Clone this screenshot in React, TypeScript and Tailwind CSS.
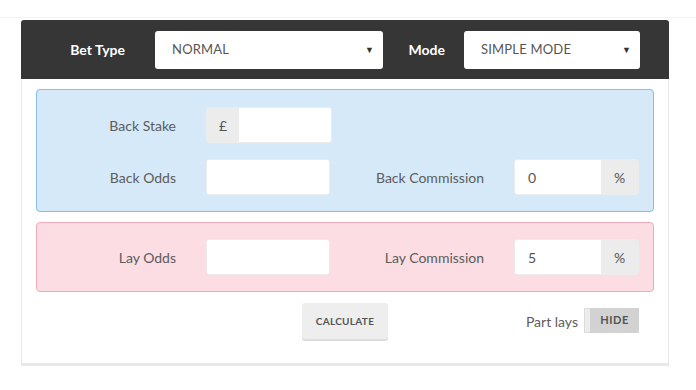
import React from 'react';

const font = { fontFamily: 'Lato, "Noto Sans", sans-serif' };

const Select = ({ value, width }: { value: string; width: string }) => (
    <div className={`${width} h-[38px] bg-white rounded-[3px] flex items-center justify-between pl-[17px] pr-[9px]`}>
        <span className="text-[13px] text-[#555] tracking-[0.2px]">{value}</span>
        <span className="text-[9px] text-[#333] leading-none">▼</span>
    </div>
);

const Field = ({ children }: { children?: React.ReactNode }) => (
    <div className="flex items-center h-[36px]">
        {children}
    </div>
);

const Label = ({ text, width }: { text: string; width: string }) => (
    <div className={`${width} text-right pr-[30px] text-[14px] text-[#5c5c5c]`}>{text}</div>
);

const TextInput = ({ value = '' }: { value?: string }) => (
    <div className="w-[124px] h-[36px] bg-white rounded-[3px] border border-[#ececec] flex items-center pl-[13px] text-[14px] text-[#555]">
        {value}
    </div>
);

const PercentInput = ({ value }: { value: string }) => (
    <div className="flex h-[36px] rounded-[3px] overflow-hidden border border-[#ececec]">
        <div className="w-[86px] bg-white flex items-center pl-[13px] text-[14px] text-[#555]">{value}</div>
        <div className="w-[37px] bg-[#ececec] flex items-center justify-center text-[14px] text-[#555]">%</div>
    </div>
);

export default function App() {
    return (
        <div className="w-[696px] h-[390px] bg-white" style={font}>
            <div className="h-[18px] border-b border-[#f3f3f3]" />
            <div className="ml-[21px] mt-[2px] w-[648px] bg-white rounded-t-[3px] border-x border-[#e8e8e8] shadow-[0_3px_0_#e8e8e8]">
                {/* header */}
                <div className="-mx-px h-[59px] bg-[#363636] rounded-t-[3px] flex items-center">
                    <div className="w-[134px] text-right pr-[30px] text-[14px] font-bold text-white">Bet Type</div>
                    <Select value="NORMAL" width="w-[228px]" />
                    <div className="w-[81px] text-right pr-[19px] text-[14px] font-bold text-white">Mode</div>
                    <Select value="SIMPLE MODE" width="w-[176px]" />
                </div>

                <div className="px-[14px] pt-[10px] pb-[24px]">
                    {/* back */}
                    <div className="bg-[#d6e9f8] border border-[#85bdeb] rounded-[4px] pt-[17px] pb-[16px] flex flex-col gap-[16px]">
                        <Field>
                            <Label text="Back Stake" width="w-[169px]" />
                            <div className="flex h-[36px] rounded-[3px] overflow-hidden border border-[#ececec]">
                                <div className="w-[32px] bg-[#ececec] flex items-center justify-center text-[14px] text-[#555]">£</div>
                                <div className="w-[92px] bg-white" />
                            </div>
                        </Field>
                        <Field>
                            <Label text="Back Odds" width="w-[169px]" />
                            <TextInput />
                            <Label text="Back Commission" width="w-[184px]" />
                            <PercentInput value="0" />
                        </Field>
                    </div>

                    {/* lay */}
                    <div className="mt-[10px] bg-[#fbdde3] border border-[#f4a9b6] rounded-[4px] pt-[16px] pb-[16px]">
                        <Field>
                            <Label text="Lay Odds" width="w-[169px]" />
                            <TextInput />
                            <Label text="Lay Commission" width="w-[184px]" />
                            <PercentInput value="5" />
                        </Field>
                    </div>

                    {/* actions */}
                    <div className="mt-[11px] grid grid-cols-3 items-center">
                        <div />
                        <div className="flex justify-center">
                            <button className="w-[86px] h-[36px] bg-[#eeeeee] rounded-[3px] shadow-[0_2px_0_#dcdcdc] text-[10px] font-bold text-[#555] tracking-[0.3px]">
                                CALCULATE
                            </button>
                        </div>
                        <div className="flex items-center justify-end pr-[15px] gap-[6px]">
                            <span className="text-[14px] text-[#5c5c5c]">Part lays</span>
                            <div className="flex h-[25px] w-[55px] mt-[-2px]">
                                <div className="w-[6px] bg-[#ececec] border border-[#dcdcdc] border-r-0" />
                                <div className="flex-1 bg-[#d2d2d2] flex items-center justify-center text-[11px] font-bold text-[#555] tracking-[0.5px]">
                                    HIDE
                                </div>
                            </div>
                        </div>
                    </div>
                </div>
            </div>
        </div>
    );
}
